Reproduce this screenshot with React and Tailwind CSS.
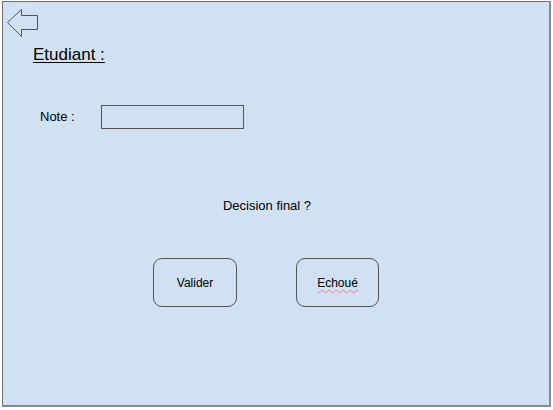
export default function App() {
  return (
    <div className="w-[553px] h-[410px] bg-white pt-[1px] pl-[2px]" style={{ fontFamily: '"Liberation Sans", Arial, sans-serif' }}>
      <div className="w-[549px] h-[406px] bg-[#cfe1f3] border border-[#707070] border-r-2 border-b-2 border-r-[#8a8a8a] border-b-[#8a8a8a] flex flex-col">
        <div className="h-[40px]">
          <svg width="40" height="38" viewBox="0 0 40 38" className="block">
            <path d="M4.5 20.5 L18.5 7.5 L18.5 13.5 L34.5 13.5 L34.5 27.5 L18.5 27.5 L18.5 34.5 Z" fill="none" stroke="#555" strokeWidth="1" />
          </svg>
        </div>
        <div className="pl-[30px] pt-[1px]">
          <span className="text-[17px] leading-[20px] text-black underline underline-offset-2">Etudiant :</span>
        </div>
        <div className="flex items-center pl-[37px] mt-[38px]">
          <span className="text-[13px] text-black w-[61px]">Note :</span>
          <div className="w-[143px] h-[24px] border border-[#555] bg-[#cfe1f3]" />
        </div>
        <div className="mt-[69px] text-center text-[13px] leading-[16px] text-black pr-[18px]">Decision final ?</div>
        <div className="flex mt-[44px] pl-[150px] gap-[59px]">
          <div className="w-[84px] h-[49px] rounded-[9px] border border-[#555] flex items-center justify-center text-[12px] text-black">Valider</div>
          <div className="w-[83px] h-[49px] rounded-[9px] border border-[#555] flex items-center justify-center text-[12px] text-black">
            <span className="underline decoration-wavy decoration-[#e08080] decoration-1 underline-offset-2">Echoué</span>
          </div>
        </div>
      </div>
    </div>
  );
}
